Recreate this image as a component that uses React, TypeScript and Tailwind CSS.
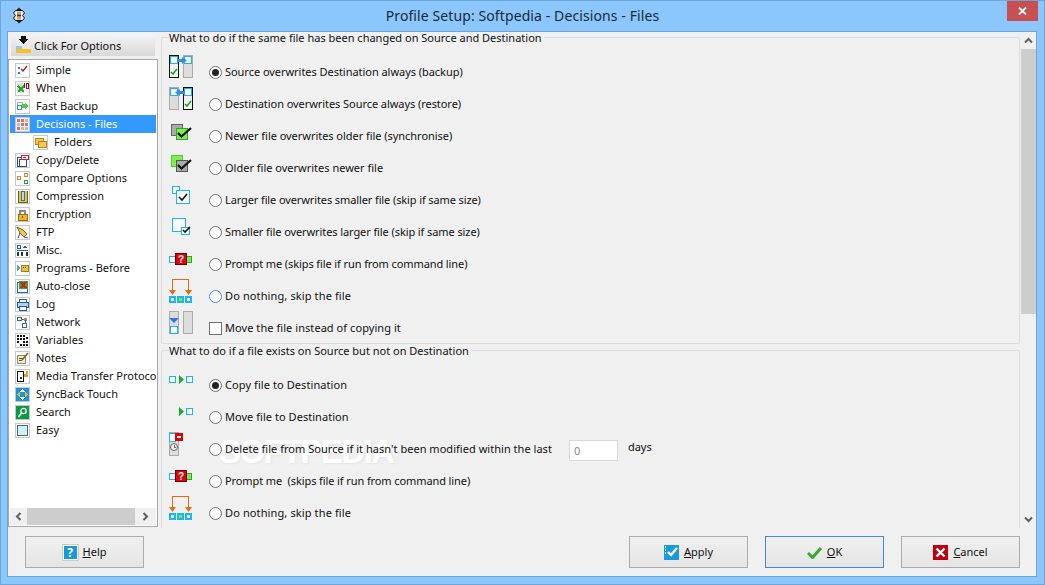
import React from 'react';

const Frame: React.FC<{ children: React.ReactNode; sel?: boolean }> = ({ children, sel }) => (
    <span className={`w-[15px] h-[15px] border border-[#c8c8c8] shrink-0 block ${sel ? 'bg-[#f0f0f0]' : 'bg-white'}`}>
        <svg width="13" height="13" viewBox="0 0 13 13" shapeRendering="crispEdges">{children}</svg>
    </span>
);

const redCells = ['1-1', '5-1', '5-5', '1-9', '9-5'];

const navIcons: Record<string, React.ReactNode> = {
    Simple: <><rect x="2" y="3" width="2" height="2" fill="#2f7fd0" /><rect x="2" y="8" width="2" height="2" fill="#2f7fd0" /><path d="M5 5l2 2 4-5" fill="none" stroke="#a02020" strokeWidth="1.3" shapeRendering="auto" /></>,
    When: <><rect x="1" y="1" width="7" height="10" fill="#ddd" /><path d="M2 4l6 6M8 4l-6 6" stroke="#22a82a" strokeWidth="2" /><rect x="8" y="1" width="1" height="5" fill="#a01010" /><rect x="10" y="1" width="2" height="5" fill="none" stroke="#a01010" /></>,
    'Fast Backup': <><rect x="1" y="2" width="5" height="3" fill="none" stroke="#aaa" /><rect x="1" y="5" width="4" height="4" fill="none" stroke="#2f8fe0" /><path d="M6 4h3V2l3 4-3 4V8H6z" fill="#58c840" /></>,
    'Decisions - Files': <>{[1, 5, 9].map(x => [1, 5, 9].map(y => <rect key={`${x}-${y}`} x={x} y={y} width="3" height="3" fill={redCells.includes(`${x}-${y}`) ? '#d87070' : '#bbb'} />))}</>,
    Folders: <><rect x="1" y="2" width="8" height="6" fill="#f6c85a" stroke="#b8860b" /><rect x="4" y="5" width="8" height="6" fill="#f6c85a" stroke="#b8860b" /></>,
    'Copy/Delete': <><rect x="1" y="3" width="7" height="9" fill="#fff" stroke="#2a4a7a" /><rect x="3" y="5" width="7" height="7" fill="#fff" stroke="#2a4a7a" /><rect x="5" y="1" width="7" height="4" fill="#fff" stroke="#c02030" /><rect x="7" y="3" width="3" height="1" fill="#c02030" /></>,
    'Compare Options': <><rect x="1.5" y="4.5" width="3" height="3" fill="none" stroke="#e08020" /><rect x="8.5" y="1.5" width="3" height="3" fill="none" stroke="#e08020" /><rect x="8.5" y="8.5" width="3" height="3" fill="none" stroke="#2a9a3a" /></>,
    Compression: <><path d="M2 1v11h9V1" fill="#f0c040" stroke="#7a5a10" /><rect x="5" y="1" width="3" height="9" fill="#b8d8f0" stroke="#3a70a0" /></>,
    Encryption: <><path d="M4 6V3h5v3" fill="none" stroke="#888" strokeWidth="1.4" /><rect x="2" y="6" width="9" height="6" fill="#f0b820" stroke="#9a7000" /><rect x="6" y="8" width="1" height="2" fill="#604000" /></>,
    FTP: <><path d="M1 1l6 3 4 4-3 3-4-4z" fill="#f4c850" stroke="#806010" shapeRendering="auto" /><path d="M4 7l-2 5M8 11l4 1" stroke="#2a4a9a" shapeRendering="auto" /></>,
    'Misc.': <><rect x="1.5" y="1.5" width="3" height="3" fill="none" stroke="#2060a0" /><path d="M7 4l2-3 2 3z" fill="#2060c0" /><path d="M1 6h11" stroke="#2060a0" /><path d="M2 8v4M6 8v4M11 8v4" stroke="#333" strokeWidth="1.5" /></>,
    'Programs - Before': <><path d="M1 3l3 3-3 3z" fill="#5a9ad0" /><rect x="5" y="3" width="7" height="6" fill="#f0c040" stroke="#a08020" /><rect x="7" y="5" width="1" height="1" fill="#604000" /><rect x="9" y="5" width="1" height="1" fill="#604000" /></>,
    'Auto-close': <><rect x="1" y="2" width="10" height="10" fill="#fff" stroke="#1a6ac0" /><rect x="3" y="1" width="9" height="8" fill="#38a838" /><path d="M5 2l5 6M10 2l-5 6" stroke="#d02020" strokeWidth="2" /></>,
    Log: <><rect x="3" y="1" width="7" height="3" fill="#fff" stroke="#1a5ab0" /><rect x="1" y="4" width="11" height="5" fill="#b8d0f0" stroke="#1a5ab0" /><rect x="3" y="8" width="7" height="4" fill="#fff" stroke="#1a5ab0" /></>,
    Network: <><rect x="1.5" y="1.5" width="4" height="3" fill="#fff" stroke="#3a6a8a" /><rect x="7.5" y="1.5" width="3" height="3" fill="#d08030" /><rect x="6.5" y="7.5" width="4" height="4" fill="#fff" stroke="#3a6a8a" /><path d="M5 3h3M9 4v4" stroke="#3a6a8a" /></>,
    Variables: <>{[[1, 1], [4, 1], [7, 1], [10, 3], [1, 4], [4, 4], [7, 4], [1, 7], [7, 7], [10, 7], [4, 10], [7, 10], [10, 10]].map(([x, y]) => <rect key={`${x}-${y}`} x={x} y={y} width="2" height="2" fill="#111" />)}</>,
    Notes: <><rect x="1.5" y="3.5" width="8" height="8" fill="#f8f0b0" stroke="#888" /><path d="M3 6h4M3 8h3" stroke="#555" /><path d="M6 8l6-7" stroke="#8a5a20" strokeWidth="1.6" shapeRendering="auto" /></>,
    'Media Transfer Protocol': <><rect x="1.5" y="1.5" width="6" height="10" fill="#fff" stroke="#111" strokeWidth="1" /><rect x="4" y="7" width="2" height="2" fill="#333" /><path d="M9 4v3M11 1v6" stroke="#e0a020" strokeWidth="1.2" /></>,
    'SyncBack Touch': <><rect width="13" height="13" fill="#1a96d8" /><path d="M6.5 1l2.5 3H4zM6.5 12l2.5-3H4z" fill="#fff" /><path d="M1 6.5l3-2.5v5zM12 6.5l-3-2.5v5z" fill="#f4b820" /></>,
    Search: <><rect width="13" height="13" fill="#0a9a40" /><circle cx="7.5" cy="5" r="2.6" fill="none" stroke="#fff" strokeWidth="1.3" shapeRendering="auto" /><path d="M5.5 7l-3 4" stroke="#fff" strokeWidth="1.6" shapeRendering="auto" /></>,
    Easy: <rect x="1.5" y="1.5" width="9.5" height="9.5" fill="#c8f4fc" stroke="#606060" />,
};

const navItems = ['Simple', 'When', 'Fast Backup', 'Decisions - Files', 'Folders', 'Copy/Delete', 'Compare Options', 'Compression', 'Encryption', 'FTP', 'Misc.', 'Programs - Before', 'Auto-close', 'Log', 'Network', 'Variables', 'Notes', 'Media Transfer Protocol', 'SyncBack Touch', 'Search', 'Easy'];

const Cyan = '#14b8f4';

// option icons, origin is the top of a 32px row
const OptIcon: React.FC<{ children: React.ReactNode }> = ({ children }) => (
    <svg width="26" height="32" viewBox="0 0 26 32" className="shrink-0 overflow-visible" shapeRendering="crispEdges">{children}</svg>
);
const Check = ({ x, y, c = '#111' }: { x: number; y: number; c?: string }) => (
    <path d={`M${x} ${y + 3}l2 2 4-5`} fill="none" stroke={c} strokeWidth="1.6" shapeRendering="auto" />
);
const Prompt = () => (
    <>
        <rect x="2.5" y="8.5" width="6" height="6" fill="#fff" stroke={Cyan} />
        <rect x="19.5" y="8.5" width="5" height="6" fill="#80e850" stroke="#2aa82a" />
        <rect x="8.5" y="5.5" width="11" height="11" fill="#e0000a" stroke="#700" />
        <text x="14" y="15" textAnchor="middle" fontSize="10" fontWeight="700" fill="#fff" fontFamily="Liberation Sans, sans-serif">?</text>
    </>
);
const Skip = () => (
    <>
        <path d="M5.5 11V-0.5h16V11" fill="none" stroke="#e86a10" />
        <path d="M2 10h7l-3.5 5zM18 10h7l-3.5 5z" fill="#e86a10" shapeRendering="auto" />
        {[2, 10, 18].map((x, i) => (
            <g key={x}>
                <rect x={x} y="16" width="7" height="7" fill={Cyan} />
                <rect x={x + 2} y="18" width="3" height="3" fill={i === 1 ? '#80e850' : '#fff'} />
            </g>
        ))}
    </>
);
const Panels = ({ dark }: { dark: 'left' | 'right' }) => (
    <>
        <rect x="2.5" y="-0.5" width="9" height="22" fill={dark === 'left' ? '#f0f0f0' : '#ddd'} stroke={dark === 'left' ? '#111' : '#aaa'} />
        <rect x="3.5" y="0.5" width="7" height="7" fill="#fff" stroke={Cyan} />
        <rect x="16.5" y="-0.5" width="9" height="22" fill={dark === 'right' ? '#f0f0f0' : '#ddd'} stroke={dark === 'right' ? '#111' : '#aaa'} />
        <rect x="17.5" y="0.5" width="7" height="7" fill="#fff" stroke={Cyan} />
    </>
);

const sameFileIcons = [
    <>
        <Panels dark="left" />
        <path d="M10 3h5V1l5 3.5-5 3.5V6h-5z" fill="#3a8aee" shapeRendering="auto" />
        <Check x={4} y={13} c="#18a828" />
    </>,
    <>
        <Panels dark="right" />
        <path d="M18 3h-5V1L8 4.5 13 8V6h5z" fill="#3a8aee" shapeRendering="auto" />
        <Check x={18} y={13} c="#18a828" />
    </>,
    <>
        <rect x="4.5" y="4.5" width="11" height="11" fill="#aaa" stroke="#666" />
        <rect x="9.5" y="8.5" width="11" height="11" fill="#80e850" stroke="#2aa82a" />
        <path d="M11 13l3.5 3.5L24 8" fill="none" stroke="#111" strokeWidth="2.2" shapeRendering="auto" />
    </>,
    <>
        <rect x="4.5" y="3.5" width="11" height="11" fill="#80f050" stroke="#50c830" />
        <rect x="9.5" y="8.5" width="11" height="11" fill="#aaa" stroke="#555" />
        <path d="M11 13l3.5 3.5L24 8" fill="none" stroke="#111" strokeWidth="2.2" shapeRendering="auto" />
    </>,
    <>
        <rect x="5.5" y="2.5" width="7" height="7" fill="#fff" stroke={Cyan} />
        <rect x="9.5" y="6.5" width="13" height="13" fill="#fff" stroke={Cyan} />
        <path d="M12 13l3 3 5-6" fill="none" stroke="#111" strokeWidth="1.6" shapeRendering="auto" />
    </>,
    <>
        <rect x="5.5" y="2.5" width="13" height="13" fill="#fff" stroke={Cyan} />
        <rect x="14.5" y="11.5" width="8" height="7" fill="#fff" stroke={Cyan} />
        <path d="M16 14l2 2 5-5" fill="none" stroke="#111" strokeWidth="1.6" shapeRendering="auto" />
    </>,
    <Prompt />,
    <Skip />,
    <>
        <rect x="2.5" y="-0.5" width="9" height="22" fill="#ddd" stroke="#aaa" />
        <rect x="16.5" y="-0.5" width="9" height="22" fill="#ddd" stroke="#aaa" />
        <path d="M2 6h10l-5 5z" fill="#2a7aee" shapeRendering="auto" />
        <rect x="3.5" y="14.5" width="7" height="7" fill="#fff" stroke={Cyan} />
    </>,
];

const missingIcons = [
    <>
        <rect x="2.5" y="7.5" width="6" height="6" fill="#fff" stroke={Cyan} />
        <path d="M12 6l5 4.5-5 4.5z" fill="#18b030" shapeRendering="auto" />
        <rect x="19.5" y="7.5" width="6" height="6" fill="#fff" stroke={Cyan} />
    </>,
    <>
        <path d="M12 6l5 4.5-5 4.5z" fill="#18b030" shapeRendering="auto" />
        <rect x="19.5" y="7.5" width="6" height="6" fill="#fff" stroke={Cyan} />
    </>,
    <>
        <rect x="2.5" y="-0.5" width="9" height="23" fill="#ddd" stroke="#aaa" />
        <rect x="2.5" y="0.5" width="6" height="8" fill="#fff" stroke={Cyan} />
        <rect x="8" y="0" width="8" height="8" fill="#e0000a" />
        <rect x="10" y="3" width="4" height="2" fill="#fff" />
        <circle cx="7" cy="14" r="3.5" fill="#eee" stroke="#666" shapeRendering="auto" />
        <path d="M7 12v2h2" fill="none" stroke="#666" />
    </>,
    <Prompt />,
    <Skip />,
];

const sameFileOptions = [
    { text: 'Source overwrites Destination always (backup)', fit: 'tracking-[-0.04px]' },
    { text: 'Destination overwrites Source always (restore)', fit: 'tracking-[-0.06px]' },
    { text: 'Newer file overwrites older file (synchronise)', fit: 'tracking-[-0.04px]' },
    { text: 'Older file overwrites newer file', fit: '' },
    { text: 'Larger file overwrites smaller file (skip if same size)', fit: 'tracking-[-0.11px]' },
    { text: 'Smaller file overwrites larger file (skip if same size)', fit: 'tracking-[-0.09px]' },
    { text: 'Prompt me (skips file if run from command line)', fit: 'tracking-[-0.1px]' },
    { text: 'Do nothing, skip the file', fit: 'tracking-[0.12px]' },
];

const missingOptions = [
    { text: 'Copy file to Destination', fit: 'tracking-[0.08px]' },
    { text: 'Move file to Destination', fit: 'tracking-[0.04px]' },
    { text: "Delete file from Source if it hasn't been modified within the last", fit: 'tracking-[0.03px]' },
    { text: 'Prompt me  (skips file if run from command line)', fit: 'tracking-[-0.1px]' },
    { text: 'Do nothing, skip the file', fit: 'tracking-[0.12px]' },
];

const Radio: React.FC<{ checked?: boolean; focus?: boolean }> = ({ checked, focus }) => (
    <span className={`w-[13px] h-[13px] rounded-full border bg-white shrink-0 flex items-center justify-center ${focus ? 'border-[#3d8bd8]' : 'border-[#707070]'}`}>
        {checked && <span className="w-[7px] h-[7px] rounded-full bg-[#222]" />}
    </span>
);

const OptRow: React.FC<{ icon: React.ReactNode; children: React.ReactNode }> = ({ icon, children }) => (
    <div className="h-8 flex items-center pl-[5px]">
        {icon}
        <div className="ml-[16px] flex items-center gap-[3px] text-[#111]">{children}</div>
    </div>
);

const Group: React.FC<{ title: string; className: string; children: React.ReactNode }> = ({ title, className, children }) => (
    <div className={`relative border border-[#dcdcdc] rounded-[2px] ${className}`}>
        <span className="absolute left-[7px] top-[-7px] bg-[#f0f0f0] pr-[2px] leading-[14px] text-[#111] whitespace-nowrap">{title}</span>
        {children}
    </div>
);

const DlgButton: React.FC<{ label: React.ReactNode; icon: React.ReactNode; focus?: boolean }> = ({ label, icon, focus }) => (
    <button className={`w-[119px] h-[32px] border flex items-center justify-center gap-[5px] bg-gradient-to-b from-[#f0f0f0] to-[#e5e5e5] text-[#111] ${focus ? 'border-[#3d8bd8]' : 'border-[#acacac]'}`}>
        {icon}
        <span>{label}</span>
    </button>
);

export default function App() {
    return (
        <div className="w-[1045px] h-[585px] bg-[#8bc6fc] border border-[#6ea6dc] flex flex-col overflow-hidden text-[11px] leading-[18px]" style={{ fontFamily: '"Noto Sans", sans-serif' }}>
            {/* title bar */}
            <div className="h-[30px] shrink-0 flex items-center relative">
                <svg width="12" height="17" viewBox="0 0 12 17" className="absolute left-[12px] top-[6px]">
                    <path d="M6 0.5l3 3H3zM6 16.5l3-3H3z" fill="#222" />
                    <path d="M2.5 3.5h7l2 2.5-2 2.5 2 2.5-2 2.5h-7l-2-2.5 2-2.5-2-2.5z" fill="#f0f0f0" stroke="#111" />
                    <rect x="4" y="4.5" width="4" height="2.5" fill="#e8a030" />
                    <rect x="4" y="7.5" width="4" height="2" fill="#333" />
                    <rect x="4" y="10" width="4" height="2.5" fill="#e8a030" />
                </svg>
                <div className="flex-1 text-center text-[14px] tracking-[0.1px] text-[#1a2a3a] leading-[30px]">Profile Setup: Softpedia - Decisions - Files</div>
                <div className="absolute right-[6px] top-0 w-[31px] h-[20px] bg-[#c75050] flex items-center justify-center">
                    <svg width="9" height="8" viewBox="0 0 9 8"><path d="M1 0.5l7 7M8 0.5l-7 7" stroke="#fff" strokeWidth="1.8" /></svg>
                </div>
            </div>

            {/* dialog body */}
            <div className="ml-[6px] mr-[7px] mb-[7px] flex-1 min-h-0 bg-[#f0f0f0] border border-[#6ea6dc] flex flex-col">
                <div className="flex h-[496px]">
                    {/* sidebar */}
                    <div className="w-[152px] shrink-0 pt-[2px] flex flex-col">
                        <div className="ml-[3px] w-[144px] h-[22px] shrink-0 bg-gradient-to-b from-[#f4f4f4] to-[#d8d8d8] flex items-center pl-[5px] gap-[3px] text-[#111]">
                            <svg width="15" height="20" viewBox="0 0 15 20" shapeRendering="crispEdges">
                                <path d="M5 1h5v3h3l-5.5 5L2 4h3z" fill="#111" />
                                <rect x="0" y="9" width="6" height="2" fill="#f0f0f0" />
                                <rect x="0" y="11" width="6" height="3" fill="#88c8f8" />
                                <rect x="0" y="14" width="15" height="4" fill="#f8c020" />
                                <rect x="6" y="9" width="9" height="5" fill="#e8e8e8" />
                            </svg>
                            <span className="pt-[1px]">Click For Options</span>
                        </div>
                        <div className="mt-[3px] h-[468px] w-[150px] border border-[#a8a8a8] bg-white flex flex-col p-px">
                            <div className="flex-1 min-h-0 overflow-hidden">
                                {navItems.map(item => {
                                    const sel = item === 'Decisions - Files';
                                    const sub = item === 'Folders';
                                    return (
                                        <div key={item} className={`h-[18px] flex items-center whitespace-nowrap overflow-hidden ${sub ? 'pl-[23px]' : 'pl-[5px]'} ${sel ? 'bg-[#3399ff] text-white' : 'text-[#111]'}`}>
                                            <Frame sel={sel}>{navIcons[item]}</Frame>
                                            <span className="ml-[6px]">{item}</span>
                                        </div>
                                    );
                                })}
                            </div>
                            <div className="h-[17px] shrink-0 bg-[#f0f0f0] flex items-center">
                                <span className="w-[17px] flex justify-center"><svg width="7" height="9" viewBox="0 0 7 9"><path d="M5.5 1L2 4.5 5.5 8" fill="none" stroke="#606060" strokeWidth="2" /></svg></span>
                                <span className="w-[108px] h-full bg-[#cdcdcd]" />
                                <span className="flex-1 flex justify-center"><svg width="7" height="9" viewBox="0 0 7 9"><path d="M1.5 1L5 4.5 1.5 8" fill="none" stroke="#606060" strokeWidth="2" /></svg></span>
                            </div>
                        </div>
                    </div>

                    {/* options pane */}
                    <div className="flex-1 min-w-0 relative overflow-hidden pt-[5px]">
                        {/* watermark */}
                        <div className="absolute left-[59px] top-[400px] text-[33px] leading-[40px] font-bold text-white tracking-[-1.6px] whitespace-nowrap" style={{ fontFamily: '"Liberation Sans", sans-serif', textShadow: '1px 1px 2px #e4e4e4' }}>SOFTPEDIA</div>

                        <Group title="What to do if the same file has been changed on Source and Destination" className="ml-[1px] mr-[16px] h-[307px] pt-[18px]">
                            {sameFileOptions.map((o, i) => (
                                <OptRow key={o.text} icon={<OptIcon>{sameFileIcons[i]}</OptIcon>}>
                                    <Radio checked={i === 0} focus={i === 7} />
                                    <span className={o.fit}>{o.text}</span>
                                </OptRow>
                            ))}
                            <OptRow icon={<OptIcon>{sameFileIcons[8]}</OptIcon>}>
                                <span className="w-[13px] h-[13px] border border-[#707070] bg-white shrink-0" />
                                <span className="tracking-[0.06px]">Move the file instead of copying it</span>
                            </OptRow>
                        </Group>
                        <Group title="What to do if a file exists on Source but not on Destination" className="ml-[1px] mr-[16px] mt-[6px] h-[220px] pt-[18px]">
                            {missingOptions.map((o, i) => (
                                <OptRow key={o.text} icon={<OptIcon>{missingIcons[i]}</OptIcon>}>
                                    <Radio checked={i === 0} />
                                    <span className={`whitespace-pre ${o.fit}`}>{o.text}</span>
                                    {i === 2 && (
                                        <>
                                            <span className="ml-[14px] mt-[2px] w-[49px] h-[21px] border border-[#d8d8d8] bg-white pl-[4px] text-[#888] leading-[19px]">0</span>
                                            <span className="ml-[7px] mb-[4px]">days</span>
                                        </>
                                    )}
                                </OptRow>
                            ))}
                        </Group>

                        {/* scrollbar */}
                        <div className="absolute right-0 top-0 bottom-0 w-[15px] bg-[#f0f0f0] flex flex-col">
                            <span className="h-[17px] flex items-center justify-center"><svg width="9" height="7" viewBox="0 0 9 7"><path d="M1 5.5L4.5 2 8 5.5" fill="none" stroke="#606060" strokeWidth="2" /></svg></span>
                            <span className="h-[265px] bg-[#cdcdcd]" />
                            <span className="flex-1" />
                            <span className="h-[17px] flex items-center justify-center"><svg width="9" height="7" viewBox="0 0 9 7"><path d="M1 1.5L4.5 5 8 1.5" fill="none" stroke="#606060" strokeWidth="2" /></svg></span>
                        </div>
                    </div>
                </div>

                {/* buttons */}
                <div className="flex-1 flex items-start pt-[8px] pl-[17px] pr-[16px]">
                    <DlgButton
                        label={<><u>H</u>elp</>}
                        icon={<span className="w-[15px] h-[15px] bg-[#1a9ad8] border border-white outline outline-1 outline-[#ccc] text-white font-bold text-[12px] leading-[14px] text-center">?</span>}
                    />
                    <div className="flex-1" />
                    <div className="flex gap-[17px]">
                        <DlgButton
                            label={<><u>A</u>pply</>}
                            icon={<svg width="15" height="15" viewBox="0 0 15 15"><rect width="15" height="15" fill="#1a9ad8" /><path d="M4 7l3 3 6-7" fill="none" stroke="#fff" strokeWidth="2.4" /><path d="M1 2h1M1 5h1M1 8h1" stroke="#fff" strokeWidth="1.5" /></svg>}
                        />
                        <DlgButton
                            focus
                            label={<><u>O</u>K</>}
                            icon={<svg width="15" height="13" viewBox="0 0 15 13"><path d="M1 7l4.5 4.5L14 2" fill="none" stroke="#3aa82a" strokeWidth="3" /></svg>}
                        />
                        <DlgButton
                            label={<><u>C</u>ancel</>}
                            icon={<svg width="15" height="15" viewBox="0 0 15 15"><rect width="15" height="15" fill="#c00010" /><path d="M3.5 3.5l8 8M11.5 3.5l-8 8" stroke="#fff" strokeWidth="2.4" /></svg>}
                        />
                    </div>
                </div>
            </div>
        </div>
    );
}
